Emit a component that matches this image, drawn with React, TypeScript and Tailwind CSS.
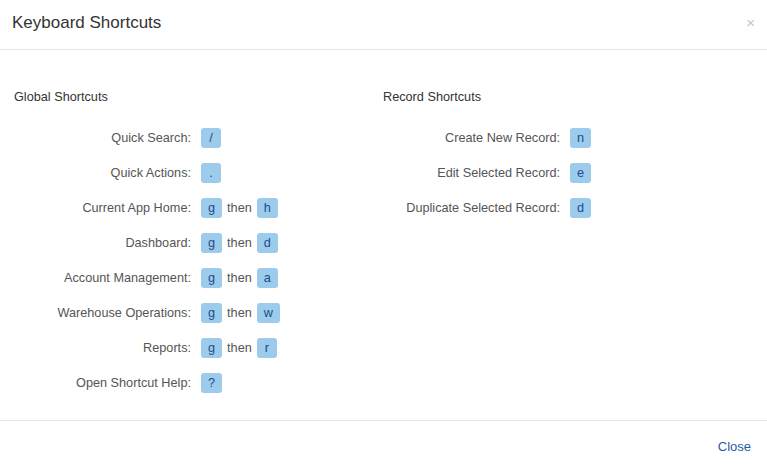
const globalShortcuts: { label: string; keys: string[] }[] = [
  { label: "Quick Search:", keys: ["/"] },
  { label: "Quick Actions:", keys: ["."] },
  { label: "Current App Home:", keys: ["g", "h"] },
  { label: "Dashboard:", keys: ["g", "d"] },
  { label: "Account Management:", keys: ["g", "a"] },
  { label: "Warehouse Operations:", keys: ["g", "w"] },
  { label: "Reports:", keys: ["g", "r"] },
  { label: "Open Shortcut Help:", keys: ["?"] },
];

const recordShortcuts: { label: string; keys: string[] }[] = [
  { label: "Create New Record:", keys: ["n"] },
  { label: "Edit Selected Record:", keys: ["e"] },
  { label: "Duplicate Selected Record:", keys: ["d"] },
];

const Key = ({ k }: { k: string }) => (
  <span className="inline-flex h-[20px] min-w-[20px] items-center justify-center rounded-[3px] bg-[#9dcbeb] px-[7px] text-[12.7px] leading-[20px] text-[#1b4c8c]">
    {k}
  </span>
);

const Section = ({
  title,
  items,
}: {
  title: string;
  items: { label: string; keys: string[] }[];
}) => (
  <div>
    <h3 className="h-[16px] text-[12.7px] leading-[16px] text-[#333]">{title}</h3>
    <div className="mt-[23px] flex flex-col gap-[15px]">
      {items.map((item) => (
        <div key={item.label} className="flex h-[20px] items-center leading-[20px]">
          <span className="w-[177px] text-right text-[12.7px] text-[#555]">
            {item.label}
          </span>
          <div className="ml-[10px] flex items-center gap-[5px]">
            <Key k={item.keys[0]} />
            {item.keys.length > 1 && (
              <>
                <span className="text-[12.7px] text-[#555]">then</span>
                <Key k={item.keys[1]} />
              </>
            )}
          </div>
        </div>
      ))}
    </div>
  </div>
);

export default function App() {
  return (
    <div
      className="flex h-[466px] w-[767px] flex-col bg-white"
      style={{ fontFamily: '"Liberation Sans", Arial, sans-serif' }}
    >
      <div className="flex h-[50px] shrink-0 items-center justify-between border-b border-[#e5e5e5] pb-[4px] pl-[12px] pr-[12px]">
        <h2 className="text-[17px] text-[#333]">Keyboard Shortcuts</h2>
        <button className="text-[15px] leading-none text-[#c4c4c4]">×</button>
      </div>
      <div className="grid flex-1 grid-cols-[369px_1fr] pl-[14px] pt-[39px]">
        <Section title="Global Shortcuts" items={globalShortcuts} />
        <Section title="Record Shortcuts" items={recordShortcuts} />
      </div>
      <div className="flex h-[46px] shrink-0 items-center justify-end border-t border-[#e5e5e5] pr-[16px] pt-[7px]">
        <button className="text-[13px] text-[#1f5ba8]">Close</button>
      </div>
    </div>
  );
}
